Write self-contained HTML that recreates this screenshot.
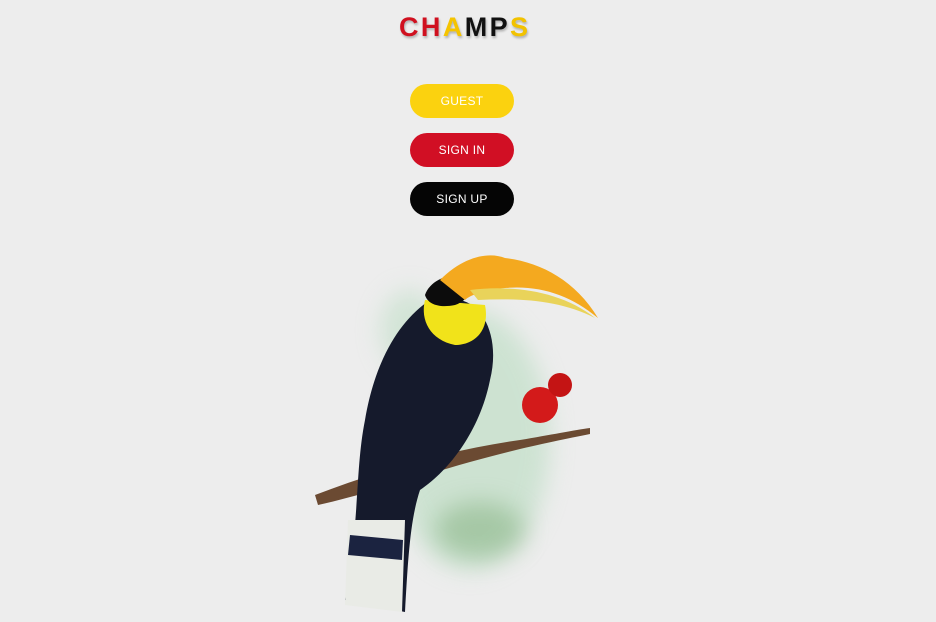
<!DOCTYPE html>
<html><head><meta charset="utf-8"><style>
html,body{margin:0;padding:0;width:936px;height:622px;background:#ededed;overflow:hidden;font-family:"Liberation Sans",sans-serif}
.logo{position:absolute;left:399px;top:12px;font-size:27px;font-weight:bold;letter-spacing:2.4px;text-shadow:1px 2px 2px rgba(0,0,0,.25)}
.btn{position:absolute;left:410px;width:104px;height:34px;border-radius:17px;color:#fff;font-size:12px;letter-spacing:.3px;text-align:center;line-height:34px}
</style></head><body>
<div class="logo"><span style="color:#d0101f">C</span><span style="color:#d0101f">H</span><span style="color:#f5c400">A</span><span style="color:#111">M</span><span style="color:#111">P</span><span style="color:#f2c200">S</span></div>
<div class="btn" style="top:84px;background:#fbd20f">GUEST</div>
<div class="btn" style="top:133px;background:#d10f24">SIGN IN</div>
<div class="btn" style="top:182px;background:#050505">SIGN UP</div>
<svg width="936" height="622" style="position:absolute;left:0;top:0">
<defs><filter id="b" x="-50%" y="-50%" width="200%" height="200%"><feGaussianBlur stdDeviation="12"/></filter></defs>
<ellipse cx="470" cy="440" rx="80" ry="130" fill="#b8dcc0" opacity=".6" filter="url(#b)"/>
<ellipse cx="480" cy="530" rx="45" ry="28" fill="#7fae7a" opacity=".5" filter="url(#b)"/>
<ellipse cx="410" cy="330" rx="30" ry="40" fill="#b8dcc0" opacity=".5" filter="url(#b)"/>
<path d="M315 495 C380 470 450 450 520 440 C550 435 575 430 590 428 L590 434 C560 440 520 448 470 462 C420 476 360 496 318 505 Z" fill="#6b4a32"/>
<path d="M430 300 C400 320 375 360 365 420 C355 470 360 520 345 600 L405 612 C408 560 410 520 420 490 C450 470 480 430 490 380 C500 340 485 305 460 300 Z" fill="#151a2c"/>
<path d="M348 520 L405 520 L402 612 L345 605 Z" fill="#e9ebe6"/>
<path d="M350 535 L403 540 L402 560 L348 555 Z" fill="#1b2340"/>
<path d="M425 300 C420 320 430 340 455 345 C475 345 490 330 485 305 Z" fill="#f1e31a"/>
<path d="M425 295 C430 280 450 272 470 275 C475 285 470 300 455 305 C440 308 428 305 425 295 Z" fill="#0c0c0c"/>
<path d="M440 280 C465 255 490 252 505 258 C540 262 575 280 598 318 C570 295 540 285 505 288 C485 290 470 295 465 300 Z" fill="#f4a91f"/>
<path d="M470 290 C510 285 560 290 595 318 C560 300 520 298 478 300 Z" fill="#e9d35a"/>
<circle cx="540" cy="405" r="18" fill="#d31a1a"/><circle cx="560" cy="385" r="12" fill="#c41414"/>
</svg>
</body></html>
